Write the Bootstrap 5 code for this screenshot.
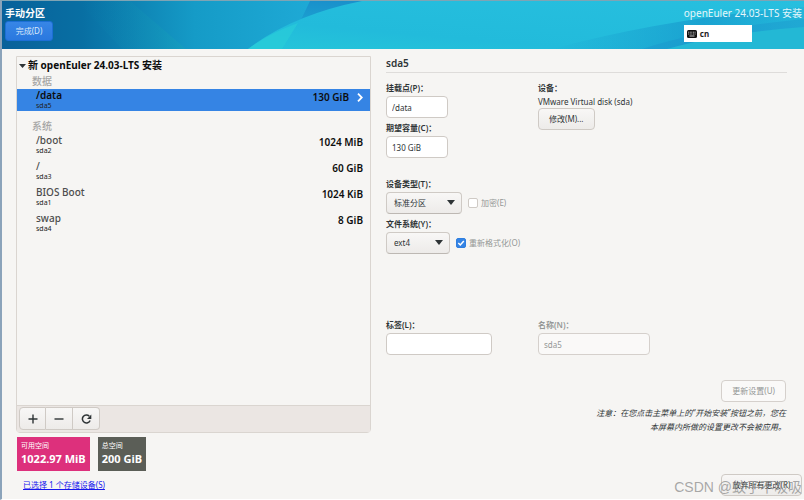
<!DOCTYPE html>
<html lang="zh-CN">
<head>
<meta charset="utf-8">
<meta name="viewport" content="width=device-width, initial-scale=1">
<title>手动分区</title>
<link href="https://cdn.jsdelivr.net/npm/bootstrap@5.3.0/dist/css/bootstrap.min.css" rel="stylesheet">
<style>
  body { font: 8px/12px "Noto Sans", "Noto Sans CJK SC", sans-serif; color: #2e3436; background: #f6f5f3; }
  .screen { min-height: 100vh; border-left: 2px solid #8ba3ba; border-top: 1px solid #7fa4b4; border-bottom: 1px solid #fff; }
  .topbar { height: 48px; position: relative; overflow: hidden; padding: 5px 2px 0 3px; color: #fff; background: #23b7da; }
  .topbar-art { position: absolute; inset: 0; width: 100%; height: 100%; }
  .page-title { font-size: 10px; line-height: 14px; font-weight: 700; margin: 0; }
  .product { font-size: 10px; line-height: 14px; color: #e4f6fb; }
  .ui-btn { font-size: 8px; line-height: 12px; height: 22px; padding: 0 10px; color: #2e3436; border: 1px solid #cfcac5; border-radius: 4px; background: linear-gradient(#f8f7f6, #edebe9); }
  .ui-btn:disabled { color: #949796; background: #faf9f8; border-color: #d5d0cc; opacity: 1; }
  .done-btn { height: 20px; width: 48px; padding: 0; margin-top: 1px; border-color: #1c6fd6; background: linear-gradient(#3786e6, #2a78df); color: #dbe9fb; border-radius: 3px; }
  .keyboard { width: 68px; height: 17px; margin-top: 5px; padding: 0 3px; gap: 3px; border: 0; background: #fff; color: #1c1c1c; font-size: 8px; line-height: 12px; font-weight: 700; }
  .content { padding: 7px 17px 0 14px; column-gap: 15px; }
  .left-pane { flex: 355 1 0; min-width: 0; }
  .right-pane { flex: 401 1 0; min-width: 0; }
  .tree { border: 1px solid #dad5d0; border-radius: 0 0 4px 4px; color: #0d0d0d; }
  .tree-title { font-size: 10px; line-height: 17px; font-weight: 700; gap: 2px; padding-left: 2px; margin: 0; }
  .tree-group { font-size: 10px; line-height: 14px; height: 15px; color: #a6a6a5; padding-left: 15px; margin: 0; font-weight: 500; }
  .mount-row { height: 26px; padding: 0 7px 0 19px; font-size: 10px; line-height: 12px; font-weight: 500; color: #4d4d4d; text-decoration: none; }
  .mount-row small { font-size: 7px; line-height: 9px; font-weight: 400; color: #222; }
  .mount-row .size { color: #0d0d0d; font-weight: 600; line-height: 16px; }
  .mount-row.selected { height: 22px; background: #3584e4; color: #0d0d0d; }
  .mount-row.selected .name { font-weight: 600; }
  .tools { height: 27px; padding: 1px 2px; background: #ebe6e3; border-top: 1px solid #dad5d0; }
  .tools .ui-btn { width: 27px; height: 23px; padding: 0; }
  .space-row { padding-left: 1px; }
  .space-box { height: 34px; padding: 4px 4px 0; color: #fff; font-size: 7px; line-height: 10px; }
  .space-box strong { font-size: 11px; line-height: 16px; font-weight: 700; }
  .space-free { background: #dd307c; }
  .space-total { background: #5b5e57; }
  .storage-link { color: #1717ee; margin: 8px 0 0 7px; }
  .detail-title { font-size: 10px; line-height: 14px; font-weight: 600; padding-bottom: 2px; margin: 0 0 9px; border-bottom: 1px solid #dedcda; }
  .ui-label { display: block; font-weight: 600; line-height: 12px; margin-bottom: 2px; }
  .ui-input { display: block; height: 22px; padding: 0 5px; font-size: 8px; line-height: 12px; border: 1px solid #cfcac5; border-radius: 4px; background: #fff; color: #2e3436; }
  .ui-input:disabled { background: #faf9f8; color: #949796; border-color: #d5d0cc; }
  .short { width: 62px; }
  .label-box { width: 106px; }
  .name-box { width: 112px; }
  .ui-select { appearance: none; display: block; height: 22px; padding: 0 7px; font-size: 8px; line-height: 12px; border: 1px solid #cfcac5; border-bottom-color: #bdb8b3; border-radius: 4px; color: #2e3436; background: linear-gradient(#f8f7f6, #edebe9); width: 100%; }
  .select-wrap { position: relative; }
  .select-wrap svg { position: absolute; right: 7px; top: 8px; pointer-events: none; }
  .wide { width: 76px; }
  .narrow { width: 64px; }
  .option-line { column-gap: 6px; }
  .option-line .tick-line { column-gap: 3px; }
  .tick { appearance: none; width: 10px; height: 10px; margin: 0; border: 1px solid #cfcac5; border-radius: 2px; background: #fff; }
  .tick:checked { border-color: #2f7fe0; background: #3584e4 url("data:image/svg+xml,%3Csvg xmlns='http://www.w3.org/2000/svg' viewBox='0 0 8 8'%3E%3Cpath d='M1.3 4l2 2 3.5-4' fill='none' stroke='white' stroke-width='1.5'/%3E%3C/svg%3E") center/8px no-repeat; }
  .muted { color: #949796; }
  .fields { display: grid; grid-template-columns: 152fr 249fr; }
  .group-gap { margin-top: 20px; }
  .lower-gap { margin-top: 65px; }
  .update-area { margin-right: 1px; }
  .notice { width: 196px; font-style: italic; line-height: 14px; margin: 4px 0 0; }
  .bottom-line { height: 28px; }
  .discard-line { height: 25px; margin: 40px -15px 0 0; }
  .discard-btn { width: 81px; padding: 0; }
  .watermark { position: absolute; right: 2px; bottom: 3px; font: 14px/18px "Liberation Sans", "Noto Sans CJK SC", sans-serif; color: #8d8d8dc0; white-space: nowrap; pointer-events: none; }
</style>
<script src="https://cdn.jsdelivr.net/npm/bootstrap@5.3.0/dist/js/bootstrap.bundle.min.js"></script>
</head>
<body>
<div class="screen d-flex flex-column position-relative">
  <header class="topbar d-flex justify-content-between">
    <svg class="topbar-art" viewBox="0 0 802 48" preserveAspectRatio="none" aria-hidden="true">
      <defs>
        <linearGradient id="sea"><stop offset="0" stop-color="#08619a"/><stop offset=".1" stop-color="#086fa3"/><stop offset=".24" stop-color="#159bc7"/><stop offset=".38" stop-color="#1ea9d5"/><stop offset="1" stop-color="#22aad5"/></linearGradient>
        <linearGradient id="wave" x1="0" y1="1" x2="1" y2="0"><stop offset="0" stop-color="#25c5d9"/><stop offset=".3" stop-color="#22bbdb"/><stop offset="1" stop-color="#27bfdf"/></linearGradient>
        <linearGradient id="shade" x1="0" y1="0" x2="0" y2="1"><stop offset="0" stop-color="#1a90cb"/><stop offset="1" stop-color="#1ba4d2"/></linearGradient>
        <linearGradient id="deep" x1="0" y1="0" x2="1" y2="0"><stop offset="0" stop-color="#1698cb" stop-opacity="0"/><stop offset=".6" stop-color="#1594ca"/><stop offset="1" stop-color="#1ca5d1" stop-opacity=".5"/></linearGradient>
        <linearGradient id="ray"><stop offset="0" stop-color="#087ba9" stop-opacity="0"/><stop offset="1" stop-color="#17a0bd"/></linearGradient>
      </defs>
      <path d="M0 0H802V48H0Z" fill="url(#sea)"/>
      <path d="M75 0H128L184 48H120Z" fill="url(#ray)" opacity=".6"/>
      <path d="M308 0H370L296 25Z" fill="url(#shade)"/>
      <path d="M246 48Q290 14 360 0H802V18Q700 28 640 48Z" fill="url(#wave)"/>
      <path d="M246 48Q268 32 296 22L280 48Z" fill="#29cfd8" opacity=".6"/>
      <path d="M550 48Q670 16 802 6V28Q720 32 670 48Z" fill="url(#deep)" opacity=".65"/>
      <path d="M665 48Q720 32 802 26V48Z" fill="#23b8d5"/>
    </svg>
    <div class="position-relative">
      <h1 class="page-title">手动分区</h1>
      <button type="button" class="ui-btn done-btn d-block">完成(D)</button>
    </div>
    <div class="position-relative">
      <div class="product">openEuler 24.03-LTS 安装</div>
      <button type="button" class="keyboard d-flex align-items-center">
        <svg width="10" height="8" viewBox="0 0 10 8" aria-hidden="true"><rect width="10" height="8" rx="1.5" fill="#111"/><path d="M1.2 2.2h7.6M1.2 4h7.6" stroke="#ddd" stroke-width=".9" stroke-dasharray=".9 .7"/><path d="M2.5 6h5" stroke="#ddd" stroke-width=".9"/></svg>
        <span>cn</span>
      </button>
    </div>
  </header>

  <main class="content d-flex flex-grow-1">
    <section class="left-pane d-flex flex-column">
      <div class="tree flex-grow-1 d-flex flex-column">
        <h2 class="tree-title d-flex align-items-center"><svg width="7" height="4" viewBox="0 0 7 4" aria-hidden="true"><path d="M0 0h7L3.5 4z" fill="#2e3436"/></svg>新 openEuler 24.03-LTS 安装</h2>
        <h3 class="tree-group">数据</h3>
        <a href="#" class="mount-row selected d-flex justify-content-between">
          <span class="d-flex flex-column"><span class="name">/data</span><small>sda5</small></span>
          <span class="size d-flex align-items-center align-self-start gap-2">130 GiB<svg width="6" height="9" viewBox="0 0 6 9" aria-hidden="true"><path d="M1 .7l3.8 3.8L1 8.3" fill="none" stroke="#fff" stroke-width="1.8"/></svg></span>
        </a>
        <h3 class="tree-group mt-2">系统</h3>
        <a href="#" class="mount-row d-flex justify-content-between"><span class="d-flex flex-column"><span>/boot</span><small>sda2</small></span><span class="size">1024 MiB</span></a>
        <a href="#" class="mount-row d-flex justify-content-between"><span class="d-flex flex-column"><span>/</span><small>sda3</small></span><span class="size">60 GiB</span></a>
        <a href="#" class="mount-row d-flex justify-content-between"><span class="d-flex flex-column"><span>BIOS Boot</span><small>sda1</small></span><span class="size">1024 KiB</span></a>
        <a href="#" class="mount-row d-flex justify-content-between"><span class="d-flex flex-column"><span>swap</span><small>sda4</small></span><span class="size">8 GiB</span></a>
        <div class="tools mt-auto">
          <div class="btn-group" role="group" aria-label="挂载点操作">
            <button type="button" class="ui-btn rounded-end-0" aria-label="添加"><svg width="10" height="10" viewBox="0 0 10 10"><path d="M5 .5v9M.5 5h9" stroke="#2e3436" stroke-width="1.4"/></svg></button>
            <button type="button" class="ui-btn rounded-0 border-start-0" aria-label="移除"><svg width="10" height="10" viewBox="0 0 10 10"><path d="M.5 5h9" stroke="#2e3436" stroke-width="1.4"/></svg></button>
            <button type="button" class="ui-btn rounded-start-0 border-start-0" aria-label="重新载入"><svg width="11" height="10" viewBox="0 0 11 10"><path d="M8.3 2.2A4 4 0 1 0 9.1 6.5" fill="none" stroke="#2e3436" stroke-width="1.5"/><path d="M10.3.6v4.3H6z" fill="#2e3436"/></svg></button>
          </div>
        </div>
      </div>
      <div class="space-row d-flex gap-2 mt-1">
        <div class="space-box space-free d-flex flex-column"><span>可用空间</span><strong>1022.97 MiB</strong></div>
        <div class="space-box space-total d-flex flex-column"><span>总空间</span><strong>200 GiB</strong></div>
      </div>
      <div class="bottom-line"><a class="storage-link d-inline-block" href="#">已选择 1 个存储设备(S)</a></div>
    </section>

    <section class="right-pane d-flex flex-column">
      <h2 class="detail-title">sda5</h2>
      <div class="fields">
        <div>
          <label class="ui-label" for="mount">挂载点(P)：</label>
          <input class="ui-input short mb-1" id="mount" value="/data">
          <label class="ui-label" for="capacity">期望容量(C)：</label>
          <input class="ui-input short" id="capacity" value="130 GiB">
        </div>
        <div>
          <div class="ui-label">设备：</div>
          <div>VMware Virtual disk (sda)</div>
          <button type="button" class="ui-btn">修改(M)...</button>
        </div>
      </div>
      <div class="group-gap">
        <label class="ui-label" for="type">设备类型(T)：</label>
        <div class="option-line d-flex align-items-center mb-1">
          <div class="select-wrap wide"><select class="ui-select" id="type"><option>标准分区</option></select><svg width="8" height="5" viewBox="0 0 8 5" aria-hidden="true"><path d="M0 0h8L4 5z" fill="#2e3436"/></svg></div>
          <div class="tick-line d-flex align-items-center"><input class="tick" type="checkbox" id="encrypt" disabled><label class="muted" for="encrypt">加密(E)</label></div>
        </div>
        <label class="ui-label" for="fs">文件系统(Y)：</label>
        <div class="option-line d-flex align-items-center">
          <div class="select-wrap narrow"><select class="ui-select" id="fs"><option>ext4</option></select><svg width="8" height="5" viewBox="0 0 8 5" aria-hidden="true"><path d="M0 0h8L4 5z" fill="#2e3436"/></svg></div>
          <div class="tick-line d-flex align-items-center"><input class="tick" type="checkbox" id="reformat" checked disabled><label class="muted" for="reformat">重新格式化(O)</label></div>
        </div>
      </div>
      <div class="fields lower-gap">
        <div><label class="ui-label" for="label">标签(L)：</label><input class="ui-input label-box" id="label"></div>
        <div><label class="ui-label muted" for="devname">名称(N)：</label><input class="ui-input name-box" id="devname" value="sda5" disabled></div>
      </div>
      <div class="update-area d-flex flex-column align-items-end mt-auto">
        <button type="button" class="ui-btn" disabled>更新设置(U)</button>
        <p class="notice text-end">注意：在您点击主菜单上的“开始安装”按钮之前，您在本屏幕内所做的设置更改不会被应用。</p>
      </div>
      <div class="discard-line text-end"><button type="button" class="ui-btn discard-btn">放弃所有更改(R)</button></div>
    </section>
  </main>
  <div class="watermark">CSDN @蚊子不吸吸</div>
</div>
</body>
</html>
